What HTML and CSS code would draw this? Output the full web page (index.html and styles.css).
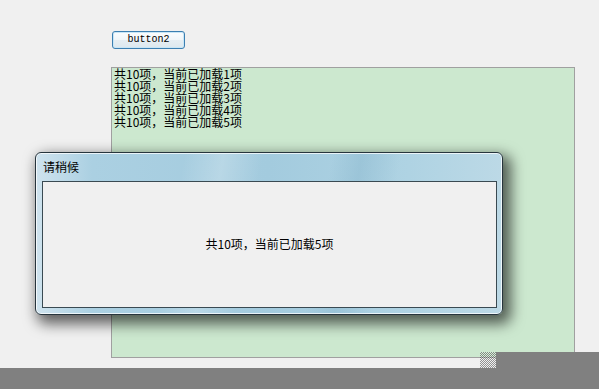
FILE: index.html
```html
<!DOCTYPE html>
<html>
<head>
<meta charset="utf-8">
<link rel="stylesheet" href="styles.css">
</head>
<body>
<div class="page">
  <div class="btn-row"><button class="btn">button2</button></div>
  <div class="textbox">
    <div class="line">共10项，当前已加载1项</div>
    <div class="line">共10项，当前已加载2项</div>
    <div class="line">共10项，当前已加载3项</div>
    <div class="line">共10项，当前已加载4项</div>
    <div class="line">共10项，当前已加载5项</div>
  </div>
  <div class="footer">
    <div class="footer-top">
      <div class="spacer"></div>
      <div class="grip"></div>
      <div class="gray-corner"></div>
    </div>
    <div class="gray-bar"></div>
  </div>
  <div class="dialog">
    <div class="title">请稍候</div>
    <div class="client">共10项，当前已加载5项</div>
  </div>
</div>
</body>
</html>
```
FILE: styles.css
```css
html, body {
  margin: 0;
  padding: 0;
  background: #f0f0f0;
  font-family: "Noto Sans CJK SC", "Liberation Sans", sans-serif;
  font-size: 12px;
  color: #000;
}
.page {
  position: relative;
  width: 599px;
  height: 389px;
  overflow: hidden;
  display: flex;
  flex-direction: column;
}
.btn-row {
  padding: 28px 0 0 112px;
  height: 18px;
}
.btn {
  box-sizing: border-box;
  width: 73px;
  height: 18px;
  margin: 0;
  padding: 0;
  border: 1px solid #3c7fb1;
  border-radius: 3px;
  background: linear-gradient(#fbfdfe 0%, #f1f6f9 50%, #e6eef3 51%, #dde8ee 100%);
  box-shadow: inset 0 0 0 1px #c9e6f6;
  font-family: "Liberation Mono", monospace;
  font-size: 10px;
  line-height: 14px;
  color: #000;
}
.textbox {
  box-sizing: border-box;
  margin: 21px 0 0 111px;
  width: 464px;
  height: 291px;
  border: 1px solid #a0a0a0;
  background: #cce8cf;
  padding: 0 0 0 2px;
}
.line {
  height: 12px;
  line-height: 12px;
  font-size: 12px;
  white-space: nowrap;
}
.footer {
  position: relative;
  margin-top: -6px;
  flex: 1;
  display: flex;
  flex-direction: column;
}
.footer-top {
  height: 16px;
  display: flex;
}
.spacer { width: 480px; }
.grip {
  width: 16px;
  background-color: #d8d8d8;
  background-image:
    repeating-conic-gradient(#222 0 25%, #f0f0f0 0 50%);
  background-size: 2px 2px;
  opacity: 0.45;
}
.gray-corner {
  flex: 1;
  background: #808080;
}
.gray-bar {
  flex: 1;
  background: #808080;
}
.dialog {
  position: absolute;
  left: 35px;
  top: 152px;
  width: 468px;
  height: 163px;
  box-sizing: border-box;
  border: 1px solid #27353d;
  border-radius: 6px;
  padding: 0 5px 6px 6px;
  display: flex;
  flex-direction: column;
  background:
    linear-gradient(100deg, rgba(255,255,255,0) 30%, rgba(255,255,255,0.22) 38%, rgba(255,255,255,0) 46%, rgba(255,255,255,0) 60%, rgba(120,170,195,0.3) 66%, rgba(255,255,255,0) 74%),
    linear-gradient(90deg, #cfe3ee 0%, #abd0e2 12%, #a3cbde 50%, #afd3e3 80%, #bcd9e6 100%);
  box-shadow:
    inset 0 0 0 1px rgba(255,255,255,0.75),
    5px 6px 14px 3px rgba(0,0,0,0.6);
}
.title {
  height: 28px;
  line-height: 28px;
  padding-left: 1px;
  font-size: 12px;
  color: #000;
}
.client {
  flex: 1;
  box-sizing: border-box;
  border: 1px solid #3a4a52;
  background: #f0f0f0;
  display: flex;
  align-items: center;
  justify-content: center;
  font-size: 12px;
  padding-bottom: 2px;
}
```
